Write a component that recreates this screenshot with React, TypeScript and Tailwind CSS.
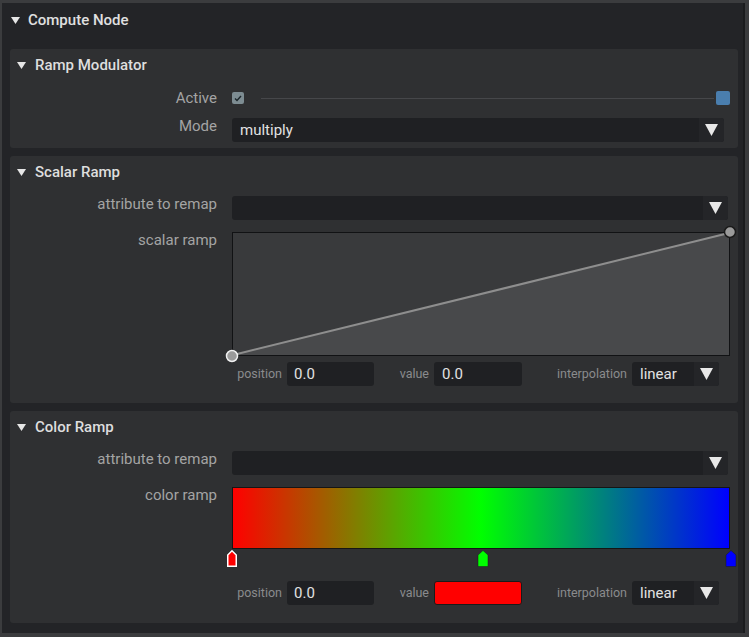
const font = { fontFamily: "Roboto, 'Noto Sans', sans-serif" };

const Tri = ({ className = "" }: { className?: string }) => (
  <svg width="9" height="7" viewBox="0 0 9 7" className={className}>
    <path d="M0 0 L9 0 L4.5 7 Z" fill="#e6e6e6" />
  </svg>
);

const Arrow = () => (
  <svg width="13" height="12" viewBox="0 0 13 12">
    <path d="M0 0 L13 0 L6.5 12 Z" fill="#e8e8e8" />
  </svg>
);

const Dropdown = ({ value = "", className = "" }: { value?: string; className?: string }) => (
  <div className={`flex h-[24px] items-stretch rounded-[3px] bg-[#1f2023] ${className}`}>
    <div className="flex flex-1 items-center pl-[8px] text-[15px] text-[#e2e2e2]">{value}</div>
    <div className="flex w-[25px] items-center justify-center rounded-r-[3px] bg-[#242528]">
      <Arrow />
    </div>
  </div>
);

const Row = ({ label, children }: { label: string; children: React.ReactNode }) => (
  <div className="flex items-start">
    <div className="w-[207px] shrink-0 text-right text-[15px] leading-[16px] text-[#a4a4a4]">{label}</div>
    <div className="ml-[15px] min-w-0 flex-1 pr-[8px]">{children}</div>
  </div>
);

const Section = ({ title, children, className = "" }: { title: string; children: React.ReactNode; className?: string }) => (
  <div className={`rounded-[3px] bg-[#2f3032] ${className}`}>
    <div className="flex h-[32px] items-center pl-[7px]">
      <Tri />
      <span className="ml-[9px] text-[15px] font-medium text-[#dedede]">{title}</span>
    </div>
    {children}
  </div>
);

const Params = ({ swatch }: { swatch?: boolean }) => (
  <div className="grid h-[24px] grid-cols-[142px_148px_197px] items-center text-[12.5px] text-[#8a8b8d]">
    <div className="flex items-center justify-end gap-[5px]">
      <span>position</span>
      <div className="flex h-[24px] w-[87px] items-center rounded-[3px] bg-[#1f2023] pl-[7px] text-[15px] text-[#e2e2e2]">0.0</div>
    </div>
    <div className="flex items-center justify-end gap-[5px]">
      <span>value</span>
      {swatch ? (
        <div className="h-[24px] w-[88px] rounded-[3px] border border-[#1a1a1a] bg-[#ff0000]" />
      ) : (
        <div className="flex h-[24px] w-[88px] items-center rounded-[3px] bg-[#1f2023] pl-[8px] text-[15px] text-[#e2e2e2]">0.0</div>
      )}
    </div>
    <div className="flex items-center justify-end gap-[5px]">
      <span>interpolation</span>
      <Dropdown value="linear" className="w-[87px]" />
    </div>
  </div>
);

export default function App() {
  return (
    <div className="h-[637px] w-[749px] bg-[#3b3c3e] pb-[4px] pl-[2px] pr-[4px] pt-[3px]" style={font}>
      <div className="h-full border-r-2 border-[#1b1c1e] bg-[#232427] pb-[11px]">
        <div className="flex h-[34px] items-center pl-[9px]">
          <Tri />
          <span className="ml-[8px] text-[15px] font-medium text-[#e0e0e0]">Compute Node</span>
        </div>

        <div className="ml-[8px] mr-[5px] mt-[12px] flex flex-col gap-[8px]">
          <Section title="Ramp Modulator" className="pb-[6px]">
            <div className="flex flex-col gap-[12px] pt-[9px]">
              <Row label="Active">
                <div className="flex h-[16px] items-center">
                  <div className="flex h-[12px] w-[12px] items-center justify-center rounded-[2px] bg-[#7d8c92]">
                    <svg width="8" height="7" viewBox="0 0 8 7">
                      <path d="M1 3.5 L3 5.5 L7 1" stroke="#1b262b" strokeWidth="1.4" fill="none" />
                    </svg>
                  </div>
                  <div className="ml-[17px] h-px flex-1 bg-[#46474a]" />
                  <div className="ml-[2px] h-[14px] w-[14px] rounded-[2px] bg-[#4a7eae]" />
                </div>
              </Row>
              <Row label="Mode">
                <Dropdown value="multiply" className="mr-[6px]" />
              </Row>
            </div>
          </Section>

          <Section title="Scalar Ramp" className="pb-[17px]">
            <div className="flex flex-col gap-[12px] pt-[8px]">
              <Row label="attribute to remap">
                <Dropdown className="mr-[2px]" />
              </Row>
              <Row label="scalar ramp">
                <div className="h-[124px] border border-[#111214] bg-[#393a3c]">
                  <svg width="100%" height="100%" viewBox="0 0 496 122" preserveAspectRatio="none" className="overflow-visible">
                    <polygon points="0,122 496,0 496,122" fill="#48494b" />
                    <line x1="0" y1="122" x2="496" y2="0" stroke="#8e8e8e" strokeWidth="2" />
                    <circle cx="-1" cy="123" r="5.5" fill="#9a9a9a" stroke="#f0f0f0" strokeWidth="1.5" />
                    <circle cx="497" cy="-1" r="5.5" fill="#9a9a9a" stroke="#1a1a1a" strokeWidth="1.5" />
                  </svg>
                </div>
                <div className="mt-[6px]">
                  <Params />
                </div>
              </Row>
            </div>
          </Section>

          <Section title="Color Ramp" className="pb-[18px]">
            <div className="flex flex-col gap-[12px] pt-[8px]">
              <Row label="attribute to remap">
                <Dropdown className="mr-[2px]" />
              </Row>
              <Row label="color ramp">
                <div className="h-[62px] border border-[#151515] bg-[linear-gradient(to_right,#ff0000,#00ff00,#0000ff)]" />
                <svg width="498" height="17" viewBox="0 0 498 17" className="mt-[1px] block overflow-visible">
                  <path d="M-4.25 16.25 L-4.25 5 L0 0.75 L4.25 5 L4.25 16.25 Z" fill="#ff0000" stroke="#ffffff" strokeWidth="1.5" />
                  <path d="M246 16.5 L246 5 L251 0.5 L256 5 L256 16.5 Z" fill="#00ff00" stroke="#1a1a1a" strokeWidth="0.5" />
                  <path d="M494 16.5 L494 5 L499 0.5 L504 5 L504 16.5 Z" fill="#0000ff" stroke="#1a1a1a" strokeWidth="0.5" />
                </svg>
                <div className="mt-[14px]">
                  <Params swatch />
                </div>
              </Row>
            </div>
          </Section>
        </div>
      </div>
    </div>
  );
}
